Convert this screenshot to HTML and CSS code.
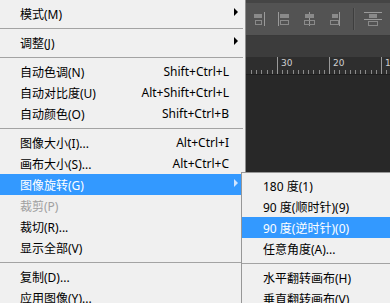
FILE: index.html
```html
<!DOCTYPE html>
<html lang="zh-CN">
<head>
  <meta charset="UTF-8">
  <meta name="viewport" content="width=device-width, initial-scale=1">
  <title>图像菜单</title>
  <link rel="stylesheet" href="styles.css">
</head>
<body>
  <div class="app">
    <ul class="menu main-menu">
      <li class="item"><span class="label">模式(M)</span><span class="arrow"></span></li>
      <li class="sep"></li>
      <li class="item"><span class="label">调整(J)</span><span class="arrow"></span></li>
      <li class="sep"></li>
      <li class="item"><span class="label">自动色调(N)</span><span class="shortcut">Shift+Ctrl+L</span></li>
      <li class="item"><span class="label">自动对比度(U)</span><span class="shortcut">Alt+Shift+Ctrl+L</span></li>
      <li class="item"><span class="label">自动颜色(O)</span><span class="shortcut">Shift+Ctrl+B</span></li>
      <li class="sep"></li>
      <li class="item"><span class="label">图像大小(I)...</span><span class="shortcut">Alt+Ctrl+I</span></li>
      <li class="item"><span class="label">画布大小(S)...</span><span class="shortcut">Alt+Ctrl+C</span></li>
      <li class="item active"><span class="label">图像旋转(G)</span><span class="arrow"></span></li>
      <li class="item disabled"><span class="label">裁剪(P)</span></li>
      <li class="item"><span class="label">裁切(R)...</span></li>
      <li class="item"><span class="label">显示全部(V)</span></li>
      <li class="sep"></li>
      <li class="item"><span class="label">复制(D)...</span></li>
      <li class="item"><span class="label">应用图像(Y)...</span></li>
    </ul>

    <div class="workspace">
      <div class="options-bar">
        <span class="tool"><svg width="14" height="16" viewBox="0 0 14 16"><rect x="2" y="3" width="8" height="4" fill="#8a8a8a"/><rect x="3.5" y="9.5" width="6" height="4" fill="none" stroke="#8a8a8a"/><line x1="12.5" y1="1" x2="12.5" y2="15" stroke="#9a9a9a"/></svg></span>
        <span class="tool"><svg width="14" height="16" viewBox="0 0 14 16"><line x1="1.5" y1="1" x2="1.5" y2="15" stroke="#9a9a9a"/><rect x="3" y="3" width="9" height="4" fill="#8a8a8a"/><rect x="3.5" y="9.5" width="8" height="4" fill="none" stroke="#8a8a8a"/></svg></span>
        <span class="tool"><svg width="14" height="16" viewBox="0 0 14 16"><line x1="7.5" y1="1" x2="7.5" y2="15" stroke="#9a9a9a"/><rect x="3" y="3" width="9" height="4" fill="#8a8a8a"/><rect x="2.5" y="9.5" width="10" height="4" fill="none" stroke="#8a8a8a"/></svg></span>
        <span class="tool"><svg width="14" height="16" viewBox="0 0 14 16"><line x1="12.5" y1="1" x2="12.5" y2="15" stroke="#9a9a9a"/><rect x="5" y="3" width="6" height="4" fill="#8a8a8a"/><rect x="3.5" y="9.5" width="8" height="4" fill="none" stroke="#8a8a8a"/></svg></span>
        <span class="divider"></span>
        <span class="tool wide"><svg width="20" height="16" viewBox="0 0 20 16"><line x1="1" y1="1.5" x2="19" y2="1.5" stroke="#9a9a9a"/><rect x="6" y="3" width="8" height="4" fill="#8a8a8a"/><line x1="1" y1="8.5" x2="19" y2="8.5" stroke="#9a9a9a"/><rect x="5.5" y="10.5" width="9" height="4" fill="none" stroke="#8a8a8a"/></svg></span>
        <span class="tool"><svg width="14" height="16" viewBox="0 0 14 16"><line x1="1" y1="1.5" x2="14" y2="1.5" stroke="#9a9a9a"/><rect x="3" y="4" width="8" height="4" fill="#8a8a8a"/></svg></span>
      </div>
      <div class="tab-strip"></div>
      <div class="ruler">
        <span class="mark"></span>
        <span class="mark">30</span>
        <span class="mark">20</span>
        <span class="mark">10</span>
      </div>
      <div class="canvas"></div>
    </div>

    <ul class="menu submenu">
      <li class="item"><span class="label">180 度(1)</span></li>
      <li class="item"><span class="label">90 度(顺时针)(9)</span></li>
      <li class="item active"><span class="label">90 度(逆时针)(0)</span></li>
      <li class="item"><span class="label">任意角度(A)...</span></li>
      <li class="sep"></li>
      <li class="item"><span class="label">水平翻转画布(H)</span></li>
      <li class="item"><span class="label">垂直翻转画布(V)</span></li>
    </ul>
  </div>
</body>
</html>
```

FILE: styles.css
```css
* {
  box-sizing: border-box;
}
html, body {
  margin: 0;
}
body {
  background: #282828;
  font-family: "Noto Sans", "Noto Sans CJK SC", sans-serif;
  font-size: 12px;
  overflow: hidden;
}
.app {
  position: relative;
  display: flex;
  height: 303px;
  overflow: hidden;
}

/* menus */
.menu {
  list-style: none;
  margin: 0;
  padding: 3px 0 0;
  background: #f0f0f0;
  color: #000;
}
.main-menu {
  width: 246px;
  flex: none;
  border-right: 1px solid #8e8e8e;
}
.item {
  display: grid;
  grid-template-columns: 1fr auto 16px;
  align-items: center;
  height: 21px;
  padding-left: 20px;
  white-space: nowrap;
}
.label {
  grid-column: 1;
}
.shortcut {
  grid-column: 2;
}
.arrow {
  grid-column: 3;
  justify-self: start;
  margin: 0 0 3px 5px;
  width: 0;
  height: 0;
  border-left: 4px solid #000;
  border-top: 4px solid transparent;
  border-bottom: 4px solid transparent;
}
.item.active {
  background: #3399ff;
  color: #fff;
}
.item.active .arrow {
  border-left-color: #cfe5ff;
}
.item.disabled {
  color: #a0a0a0;
}
.sep {
  height: 1px;
  margin: 4px 2px 3px 0;
  background: #a3a3a3;
}
.submenu {
  position: absolute;
  left: 241px;
  top: 172px;
  width: 170px;
  padding-top: 2px;
  border: 1px solid #979797;
}
.submenu .item {
  padding-left: 21px;
}
.submenu .sep {
  margin-right: 0;
}

/* photoshop workspace */
.workspace {
  flex: 1;
  display: flex;
  flex-direction: column;
  min-width: 0;
}
.options-bar {
  display: flex;
  align-items: center;
  height: 36px;
  flex: none;
  padding-left: 0;
  background: #535353;
  border-top: 3px solid #454545;
  border-bottom: 1px solid #3a3a3a;
  overflow: hidden;
}
.tool {
  display: flex;
  justify-content: center;
  width: 25px;
  flex: none;
}
.tool svg {
  display: block;
}
.divider {
  width: 2px;
  height: 22px;
  margin: 0 5px 0 7px;
  flex: none;
  border-left: 1px solid #3e3e3e;
  border-right: 1px solid #5e5e5e;
}
.tab-strip {
  height: 21px;
  flex: none;
  background: #3c3c3c;
}
.ruler {
  display: flex;
  height: 18px;
  flex: none;
  background-color: #2e2e2e;
  background-image: repeating-linear-gradient(to right, #8a8a8a 0 1px, transparent 1px 5.2px);
  background-size: 100% 4px;
  background-repeat: no-repeat;
  background-position: 5px 100%;
  border-bottom: 1px solid #1e1e1e;
  overflow: hidden;
}
.mark {
  width: 52px;
  flex: none;
  padding: 1px 0 0 3px;
  border-left: 1px solid #9a9a9a;
  color: #d0d0d0;
  font-family: "DejaVu Sans", sans-serif;
  font-size: 9px;
  line-height: 11px;
}
.mark:first-child {
  width: 31px;
  border-left: none;
}
.canvas {
  flex: 1;
  background: #282828;
}
```
